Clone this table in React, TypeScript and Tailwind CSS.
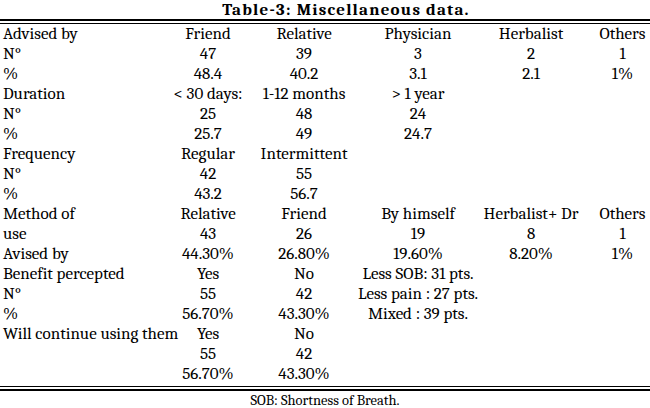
const rows: string[][] = [
  ["Advised by", "Friend", "Relative", "Physician", "Herbalist", "Others"],
  ["N°", "47", "39", "3", "2", "1"],
  ["%", "48.4", "40.2", "3.1", "2.1", "1%"],
  ["Duration", "< 30 days:", "1-12 months", "> 1 year", "", ""],
  ["N°", "25", "48", "24", "", ""],
  ["%", "25.7", "49", "24.7", "", ""],
  ["Frequency", "Regular", "Intermittent", "", "", ""],
  ["N°", "42", "55", "", "", ""],
  ["%", "43.2", "56.7", "", "", ""],
  ["Method of", "Relative", "Friend", "By himself", "Herbalist+ Dr", "Others"],
  ["use", "43", "26", "19", "8", "1"],
  ["Avised by", "44.30%", "26.80%", "19.60%", "8.20%", "1%"],
  ["Benefit percepted", "Yes", "No", "Less SOB: 31 pts.", "", ""],
  ["N°", "55", "42", "Less pain : 27 pts.", "", ""],
  ["%", "56.70%", "43.30%", "Mixed : 39 pts.", "", ""],
  ["Will continue using them", "Yes", "No", "", "", ""],
  ["", "55", "42", "", "", ""],
  ["", "56.70%", "43.30%", "", "", ""],
];

export default function App() {
  return (
    <div className="h-[408px] w-[650px] overflow-hidden bg-white font-serif text-black">
      <h1 className="flex h-[19px] items-center justify-center pl-[42px] text-[17px] font-bold leading-none tracking-[1.2px]">
        Table-3: Miscellaneous data.
      </h1>
      <div className="h-[5px] border-t-2 border-b border-black" />

      <div className="grid grid-cols-[165px_86px_106px_122px_104px_1fr] text-[17px] leading-[20px]">
        {rows.map((row, i) =>
          row.map((cell, j) => (
            <div
              key={`${i}-${j}`}
              className={
                j === 0
                  ? "h-[20px] whitespace-nowrap pl-[3px]"
                  : j === 5
                    ? "h-[20px] whitespace-nowrap pl-3 text-center"
                    : "h-[20px] whitespace-nowrap text-center"
              }
            >
              {cell}
            </div>
          ))
        )}
      </div>

      <div className="mt-[2px] h-[5px] border-t border-b-2 border-black" />
      <p className="pt-[1px] text-center text-[14.5px] leading-[18px]">
        SOB: Shortness of Breath.
      </p>
    </div>
  );
}
